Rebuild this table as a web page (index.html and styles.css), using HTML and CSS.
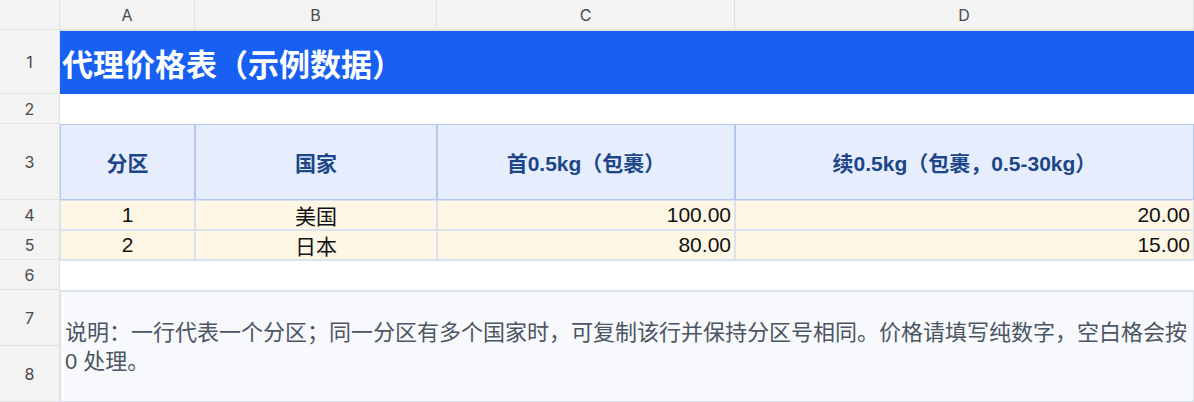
FILE: index.html
```html
<!DOCTYPE html>
<html lang="zh-CN">
<head>
<meta charset="utf-8">
<title>代理价格表</title>
<link rel="stylesheet" href="styles.css">
</head>
<body>
<div class="sheet">
  <div class="hd corner"></div>
  <div class="hd col">A</div>
  <div class="hd col">B</div>
  <div class="hd col">C</div>
  <div class="hd col">D</div>

  <div class="hd row">1</div>
  <div class="title">代理价格表（示例数据）</div>

  <div class="hd row">2</div>
  <div class="blank"></div>

  <div class="hd row">3</div>
  <div class="th">分区</div>
  <div class="th">国家</div>
  <div class="th">首0.5kg（包裹）</div>
  <div class="th">续0.5kg（包裹，0.5-30kg）</div>

  <div class="hd row">4</div>
  <div class="td center">1</div>
  <div class="td center">美国</div>
  <div class="td num">100.00</div>
  <div class="td num">20.00</div>

  <div class="hd row">5</div>
  <div class="td center">2</div>
  <div class="td center">日本</div>
  <div class="td num">80.00</div>
  <div class="td num">15.00</div>

  <div class="hd row">6</div>
  <div class="blank gap"></div>

  <div class="hd row">7</div>
  <div class="note">说明：一行代表一个分区；同一分区有多个国家时，可复制该行并保持分区号相同。价格请填写纯数字，空白格会按 0 处理。</div>
  <div class="hd row">8</div>
</div>
</body>
</html>
```
FILE: styles.css
```css
* { box-sizing: border-box; }
html, body { margin: 0; padding: 0; background: #ffffff; }
body {
  font-family: "Liberation Sans", "Noto Sans CJK SC", sans-serif;
  width: 1194px;
  height: 402px;
  overflow: hidden;
}
.sheet {
  display: grid;
  grid-template-columns: 60px 135px 242px 298px 459px;
  grid-template-rows: 30px 64px 30px 76px 30px 30px 30px 56px 56px;
}
.hd {
  background: #f3f3f3;
  color: #4a4a4a;
  font-family: Inter, "Noto Sans", sans-serif;
  font-size: 16px;
  display: flex;
  align-items: center;
  justify-content: center;
  border-right: 1px solid #e1e1e1;
  border-bottom: 1px solid #e1e1e1;
}
.title {
  grid-column: span 4;
  background: #1760f2;
  color: #ffffff;
  font-family: "Liberation Sans", "Noto Sans CJK SC", sans-serif;
  font-weight: 700;
  font-size: 31px;
  display: flex;
  align-items: center;
  padding-left: 2px;
  border-top: 1px solid #e1e1e1;
}
.blank {
  grid-column: span 4;
  background: #ffffff;
}
.blank.gap {
  border-top: 1px solid #dbe2ee;
}
.th {
  background: #e6eefd;
  color: #1d4689;
  font-weight: 700;
  font-size: 21px;
  display: flex;
  align-items: center;
  justify-content: center;
  border: 1px solid #b4c8ee;
}
.td {
  background: #fef7e6;
  color: #111111;
  font-size: 21px;
  display: flex;
  align-items: center;
  border: 1px solid #dae2ef;
}
.center { justify-content: center; }
.num { justify-content: flex-end; padding-right: 3px; }
.note {
  grid-column: span 4;
  grid-row: span 2;
  background: #f7f9fc;
  color: #4b5563;
  font-size: 22px;
  line-height: 29px;
  display: flex;
  align-items: center;
  padding: 0 4px 0 4px;
  border: 1px solid #dbe2ec;
  border-top-width: 2px;
}
```
